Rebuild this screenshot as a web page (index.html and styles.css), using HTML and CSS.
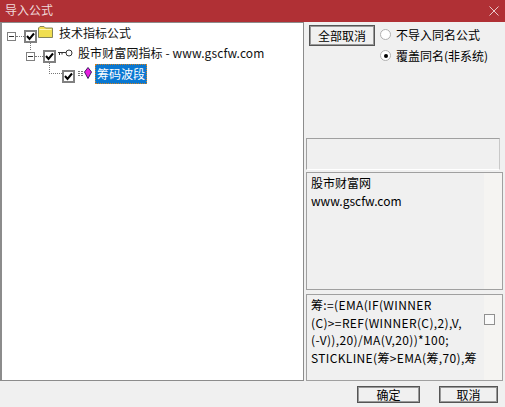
FILE: index.html
```html
<!DOCTYPE html>
<html lang="en">
<head>
  <meta charset="UTF-8" />
  <title>导入公式</title>
  <link rel="stylesheet" href="styles.css">
</head>
<body>
  <div class="dialog">
    <!-- Title bar -->
    <div class="titlebar">
      <span class="title">导入公式</span>
      <svg class="close" width="10" height="10" viewBox="0 0 10 10"><path d="M0.5 0.5L9.5 9.5M9.5 0.5L0.5 9.5" stroke="#e9c9ca" fill="none"/></svg>
    </div>

    <div class="main">
      <!-- Formula tree -->
      <div class="tree">
        <div class="tree-row row-root">
          <svg class="expander" width="9" height="9" viewBox="0 0 9 9"><rect x="0.5" y="0.5" width="8" height="8" fill="#fff" stroke="#808080"/><path d="M2 4.5H7" stroke="#333"/></svg>
          <span class="dots dots-h"></span>
          <span class="check"><svg width="9" height="9" viewBox="0 0 9 9"><path d="M1 4L3.5 7L8 1.5" stroke="#000" stroke-width="2" fill="none"/></svg></span>
          <svg class="icon folder-icon" width="15" height="12" viewBox="0 0 15 12"><path d="M0.5 11.5V2L2 0.5H6L7.5 2H14.5V11.5Z" fill="#f0de50" stroke="#85855a"/><path d="M1.5 3.5H13.5" stroke="#fff9b8"/></svg>
          <span class="tree-label">技术指标公式</span>
        </div>
        <div class="tree-row row-group">
          <svg class="expander" width="9" height="9" viewBox="0 0 9 9"><rect x="0.5" y="0.5" width="8" height="8" fill="#fff" stroke="#808080"/><path d="M2 4.5H7" stroke="#333"/></svg>
          <span class="dots dots-h"></span>
          <span class="check"><svg width="9" height="9" viewBox="0 0 9 9"><path d="M1 4L3.5 7L8 1.5" stroke="#000" stroke-width="2" fill="none"/></svg></span>
          <svg class="icon key-icon" width="15" height="8" viewBox="0 0 15 8"><circle cx="11" cy="4" r="3" fill="#fff" stroke="#333"/><path d="M0 3.5H8M1.5 3.5V6M4 3.5V5.5" stroke="#333" fill="none"/></svg>
          <span class="tree-label">股市财富网指标 - www.gscfw.com</span>
        </div>
        <div class="tree-row row-leaf">
          <span class="dots dots-elbow"></span>
          <span class="check"><svg width="9" height="9" viewBox="0 0 9 9"><path d="M1 4L3.5 7L8 1.5" stroke="#000" stroke-width="2" fill="none"/></svg></span>
          <svg class="icon leaf-icon" width="15" height="12" viewBox="0 0 15 12"><path d="M1 4.5H6M1 6.5H6M1 8.5H6" stroke="#777" stroke-dasharray="2 1"/><path d="M11 0.5L14.5 5L11 11.5L7.5 5Z" fill="#e81ce0" stroke="#402060"/></svg>
          <span class="tree-label selected">筹码波段</span>
        </div>
      </div>

      <!-- Right side options -->
      <div class="side">
        <div class="options">
          <button class="btn btn-all">全部取消</button>
          <div class="radios">
            <div class="radio-row"><span class="radio"></span>不导入同名公式</div>
            <div class="radio-row"><span class="radio on"></span>覆盖同名(非系统)</div>
          </div>
        </div>
        <div class="panel panel-empty"></div>
        <div class="panel panel-memo">股市财富网<br>www.gscfw.com</div>
        <div class="panel panel-code">
          <div class="code-text">筹:=(EMA(IF(WINNER<br>(C)&gt;=REF(WINNER(C),2),V,<br>(-V)),20)/MA(V,20))*100;<br>STICKLINE(筹&gt;EMA(筹,70),筹</div>
          <span class="code-box"></span>
        </div>
      </div>
    </div>

    <div class="footer">
      <button class="btn btn-ok">确定</button>
      <button class="btn btn-cancel">取消</button>
    </div>
  </div>
</body>
</html>
```

FILE: styles.css
```css
/* Base */
html, body {
  margin: 0;
  height: 100%;
  overflow: hidden;
}
body {
  font-family: "Noto Sans CJK SC", "Liberation Sans", sans-serif;
  font-size: 12px;
  color: #000;
  background: #f0f0f0;
}
.dialog {
  width: 505px;
  height: 407px;
  display: flex;
  flex-direction: column;
}

/* Title bar */
.titlebar {
  height: 22px;
  flex: none;
  background: #b03035;
  color: #efd9da;
  display: flex;
  align-items: center;
  justify-content: space-between;
  padding: 0 6px 0 5px;
}
.title {
  font-size: 12px;
  line-height: 20px;
  margin-bottom: 2px;
}

/* Main area */
.main {
  height: 359px;
  flex: none;
  display: flex;
}

/* Tree */
.tree {
  width: 304px;
  flex: none;
  background: #fff;
  border: 1px solid #8c8c8c;
  border-left-width: 2px;
  box-sizing: border-box;
  padding-top: 3px;
}
.tree-row {
  display: flex;
  align-items: center;
  height: 20px;
  position: relative;
}
.row-root { padding-left: 5px; }
.row-group { padding-left: 24px; }
.row-leaf { padding-left: 60px; }
.expander { flex: none; }
.dots { flex: none; display: block; }
.dots-h {
  width: 8px;
  border-top: 1px dotted #777;
}
.dots-elbow {
  position: absolute;
  left: 47px;
  top: -3px;
  width: 12px;
  height: 10px;
  border-left: 1px dotted #777;
  border-bottom: 1px dotted #777;
}
.row-root .check::after {
  content: "";
  position: absolute;
  left: 4px;
  top: 11px;
  height: 7px;
  border-left: 1px dotted #777;
}
.check {
  position: relative;
  width: 9px;
  height: 9px;
  flex: none;
  border: 2px solid #808080;
  background: #fff;
  display: flex;
}
.icon { flex: none; }
.folder-icon { margin-left: 1px; margin-top: -9px; }
.key-icon { margin-left: 2px; margin-top: -7px; }
.leaf-icon { margin-left: 2px; margin-top: -6px; }
.tree-label {
  align-self: flex-start;
  margin-top: -2px;
  margin-left: 6px;
  font-size: 12px;
  line-height: 18px;
  white-space: nowrap;
  color: #111;
}
.row-group .tree-label { margin-left: 5px; letter-spacing: 0.1px; }
.tree-label.selected {
  margin-left: 3px;
  padding: 0 2px;
  line-height: 20px;
  background: #0a78d2;
  color: #fff;
  outline: 1px dotted #d08020;
  outline-offset: -1px;
}

/* Side column */
.side {
  flex: 1;
  display: flex;
  flex-direction: column;
  padding-left: 2px;
}
.options {
  height: 116px;
  box-sizing: border-box;
  flex: none;
  display: flex;
  align-items: flex-start;
  padding-top: 3px;
  padding-left: 3px;
}
.btn {
  font: inherit;
  color: #000;
  background: #f0f0f0;
  border: 1px solid #555;
  box-shadow: inset 0 0 0 1px #999;
  padding: 0;
}
.btn-all {
  width: 66px;
  height: 21px;
}
.radios {
  margin-left: 5px;
  margin-top: -1px;
}
.radio-row {
  display: flex;
  align-items: center;
  height: 21px;
  gap: 5px;
  white-space: nowrap;
}
.radio {
  width: 9px;
  height: 9px;
  border-radius: 50%;
  background: #fff;
  border: 1px solid #b0b0b0;
  display: flex;
  align-items: center;
  justify-content: center;
}
.radio.on::after {
  content: "";
  width: 4px;
  height: 4px;
  border-radius: 50%;
  background: #000;
}

/* Side panels */
.panel {
  box-sizing: border-box;
  border: 1px solid #a0a0a0;
  flex: none;
}
.panel-empty {
  width: 194px;
  height: 32px;
  border-right-color: #c8c8c8;
  border-bottom-color: #fff;
}
.panel-memo {
  width: 197px;
  height: 118px;
  margin-top: 2px;
  padding: 1px 4px;
  line-height: 18px;
  background: linear-gradient(to right, #f0f0f0 177px, #f5f4f2 177px);
}
.panel-code {
  width: 197px;
  height: 87px;
  margin-top: 4px;
  padding: 1px 4px;
  line-height: 17.6px;
  display: flex;
  justify-content: space-between;
  white-space: nowrap;
  background: linear-gradient(to right, #f0f0f0 177px, #f5f4f2 177px);
}
.code-text { letter-spacing: 0.36px; }
.code-box {
  width: 9px;
  height: 9px;
  background: #fafafa;
  border: 1px solid #909090;
  margin: 18px 3px 0 0;
  flex: none;
}

/* Footer */
.footer {
  flex: 1;
  display: flex;
  justify-content: flex-end;
  align-items: flex-start;
  gap: 19px;
  padding: 5px 7px 0 0;
}
.btn-ok, .btn-cancel {
  width: 63px;
  height: 17px;
  line-height: 15px;
}
.btn-cancel { width: 59px; }
```
